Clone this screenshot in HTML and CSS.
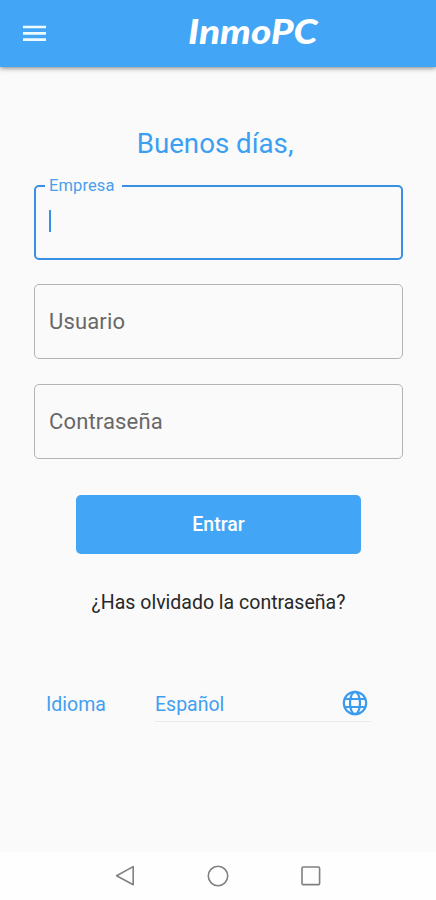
FILE: index.html
```
<!DOCTYPE html>
<html lang="es">
<head>
<meta charset="utf-8">
<title>InmoPC</title>
<link rel="stylesheet" href="styles.css">
</head>
<body>
<header class="appbar">
  <svg class="menu" width="23" height="17" viewBox="0 0 23 17"><path d="M0 2h23M0 8.3h23M0 14.6h23" stroke="#f0fbff" stroke-width="2.7"/></svg>
  <div class="logo">InmoPC</div>
</header>
<main class="content">
  <h1 class="greeting">Buenos días,</h1>
  <form class="form">
    <fieldset class="field active"><legend class="legend">Empresa</legend><span class="caret"></span></fieldset>
    <div class="field"><span class="label">Usuario</span></div>
    <div class="field"><span class="label">Contraseña</span></div>
    <button class="submit" type="button"><span>Entrar</span></button>
  </form>
  <div class="forgot">¿Has olvidado la contraseña?</div>
  <div class="language">
    <span class="name">Idioma</span>
    <div class="select">
      <span class="value">Español</span>
      <svg class="globe" width="26" height="26" viewBox="0 0 26 26" fill="none" stroke="#3b9bee" stroke-width="2.2"><circle cx="13" cy="13" r="11.2"/><ellipse cx="13" cy="13" rx="5" ry="11.2"/><path d="M2.5 9h21M2.5 17h21"/></svg>
    </div>
  </div>
</main>
<nav class="navbar">
  <svg width="20" height="22" viewBox="0 0 20 22"><path d="M18.2 1.6v18.2L1.6 10.7z"/></svg>
  <svg width="22" height="22" viewBox="0 0 22 22"><circle cx="11" cy="11" r="9.7"/></svg>
  <svg width="20" height="20" viewBox="0 0 20 20"><rect x="1" y="1" width="17.6" height="17.6" rx="1.2"/></svg>
</nav>
</body>
</html>
```
FILE: styles.css
```
* { box-sizing: border-box; }
body {
  margin: 0;
  width: 436px;
  height: 900px;
  display: flex;
  flex-direction: column;
  overflow: hidden;
  background: #fafafa;
  font-family: Roboto, sans-serif;
  color: #2196f3;
}
.appbar {
  height: 67px;
  flex: none;
  display: grid;
  grid-template-columns: 188px auto;
  justify-content: start;
  background: #42a5f5;
  box-shadow: 0 1px 5px rgba(0, 0, 0, .5);
}
.menu { margin: 25px 0 0 23px; }
.logo {
  margin-top: 10px;
  font: italic 900 34px/42px Lato, sans-serif;
  color: #fff;
  white-space: nowrap;
  transform: scaleX(1.14);
  transform-origin: left;
}
.content { flex: 1; padding: 57px 33px 0 34px; }
.greeting {
  margin: 0 7px 0 0;
  height: 40px;
  font-size: 27.7px;
  font-weight: 400;
  line-height: 40px;
  text-align: center;
  color: #3b9ff2;
}
.form { display: flex; flex-direction: column; margin-top: 20px; }
.field {
  height: 75px;
  margin: 0 0 25px;
  padding: 0 14px;
  display: flex;
  align-items: center;
  border: 1px solid #b4b4b4;
  border-radius: 5px;
}
.field.active {
  display: block;
  height: 84px;
  margin-bottom: 24px;
  margin-top: -8px;
  padding: 0 13px;
  border: 2px solid #398fe2;
}
.legend {
  margin-left: -4px;
  padding: 0 7px 0 4px;
  height: 20px;
  font-size: 16.5px;
  line-height: 20px;
  letter-spacing: .1px;
  color: #4a9fec;
}
.caret { display: block; width: 2px; height: 22px; margin-top: 14px; background: #398fe2; }
.label { font-size: 22px; color: #686868; letter-spacing: .15px; }
.submit {
  width: 285px;
  height: 59px;
  margin: 11px auto 0 42px;
  border: 0;
  border-radius: 5px;
  background: #42a5f5;
  color: #fff;
  font: 500 19.5px/59px Roboto, sans-serif;
  padding: 0;
}
.forgot {
  margin-top: 34px;
  height: 30px;
  font-size: 19.5px;
  line-height: 30px;
  text-align: center;
  color: #282828;
}
.language {
  display: flex;
  margin: 69px 0 0 12px;
  font-size: 19.5px;
  line-height: 35px;
  color: #429ff0;
}
.name { width: 109px; }
.select {
  width: 216px;
  height: 35px;
  display: flex;
  justify-content: space-between;
  border-bottom: 1px solid #ebebeb;
}
.globe { margin: 3px 3px 0 0; }
.navbar {
  height: 48px;
  flex: none;
  display: flex;
  align-items: center;
  justify-content: space-between;
  padding: 0 115px;
  background: #fefefe;
}
.navbar svg { fill: none; stroke: #808080; stroke-width: 1.6; stroke-linejoin: round; }
```
